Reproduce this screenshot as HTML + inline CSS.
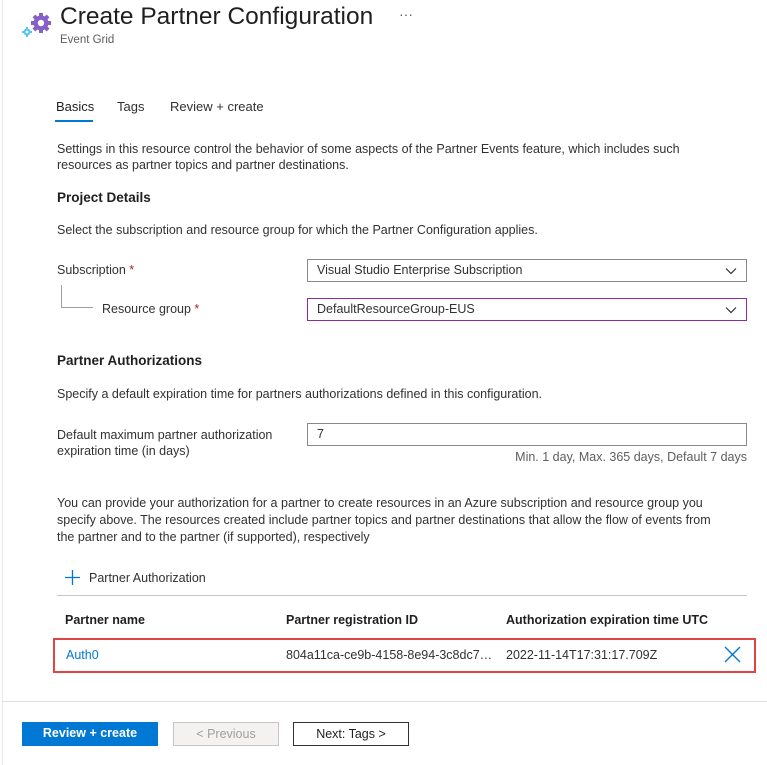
<!DOCTYPE html>
<html><head><meta charset="utf-8"><style>
*{box-sizing:border-box;margin:0;padding:0}
body{width:767px;height:765px;background:#fff;font-family:"Liberation Sans",sans-serif;font-size:12.5px;color:#323130;position:relative;overflow:hidden}
.a{position:absolute;white-space:nowrap}
.dd{position:absolute;border:1px solid #8a8886;height:23px;padding-left:9px;line-height:21px;font-size:12.5px}
.chev{position:absolute;right:9px;top:5px}
.req{color:#a4262c}
.btn{position:absolute;height:24px;line-height:23px;text-align:center;font-size:12.5px}
.h{font-size:13.5px;font-weight:600;color:#201f1e}
</style></head><body>
<div class="a" style="left:2px;top:0;width:1px;height:765px;background:#e8e8e8"></div>
<svg class="a" style="left:21px;top:11px" width="32" height="28" viewBox="0 0 32 28">
<g fill="#8661c5"><circle cx="20" cy="12" r="7.5"/>
<rect x="18" y="2" width="4" height="20"/><rect x="10" y="10" width="20" height="4"/>
<rect x="18" y="2" width="4" height="20" transform="rotate(45 20 12)"/><rect x="18" y="2" width="4" height="20" transform="rotate(-45 20 12)"/></g>
<circle cx="20" cy="12" r="3.2" fill="#fff"/>
<g fill="#50c7f0"><circle cx="6" cy="21" r="3.5"/><rect x="5" y="16" width="2" height="10"/><rect x="1" y="20" width="10" height="2"/></g>
<circle cx="6" cy="21" r="1.4" fill="#fff"/>
</svg>
<div class="a" style="left:60px;top:3px;font-size:24.5px;color:#201f1e">Create Partner Configuration</div>
<div class="a" style="left:399px;top:6px;font-size:14px;color:#605e5c">···</div>
<div class="a" style="left:60px;top:34px;font-size:11.5px;color:#605e5c">Event Grid</div>

<div class="a" style="left:56px;top:99px;font-size:13px;color:#201f1e">Basics</div>
<div class="a" style="left:55px;top:120px;width:38px;height:2px;background:#0078d4"></div>
<div class="a" style="left:117px;top:99px;font-size:13px">Tags</div>
<div class="a" style="left:170px;top:99px;font-size:13px">Review + create</div>

<div class="a" style="left:57px;top:141px;line-height:16px;white-space:normal;width:650px">Settings in this resource control the behavior of some aspects of the Partner Events feature, which includes such resources as partner topics and partner destinations.</div>
<div class="a h" style="left:57px;top:190px">Project Details</div>
<div class="a" style="left:57px;top:223px">Select the subscription and resource group for which the Partner Configuration applies.</div>

<div class="a" style="left:57px;top:263px">Subscription <span class="req">*</span></div>
<div class="a" style="left:61px;top:285px;width:1px;height:23px;background:#a19f9d"></div>
<div class="a" style="left:61px;top:307px;width:32px;height:1px;background:#a19f9d"></div>
<div class="a" style="left:102px;top:302px">Resource group <span class="req">*</span></div>
<div class="dd" style="left:307px;top:259px;width:440px">Visual Studio Enterprise Subscription<svg class="chev" width="12" height="12"><path d="M1 3.5l5 5 5-5" fill="none" stroke="#323130" stroke-width="1.2"/></svg></div>
<div class="dd" style="left:307px;top:298px;width:440px;border-color:#8a2da5">DefaultResourceGroup-EUS<svg class="chev" width="12" height="12"><path d="M1 3.5l5 5 5-5" fill="none" stroke="#323130" stroke-width="1.2"/></svg></div>

<div class="a h" style="left:57px;top:353px">Partner Authorizations</div>
<div class="a" style="left:57px;top:387px">Specify a default expiration time for partners authorizations defined in this configuration.</div>
<div class="a" style="left:57px;top:427px;line-height:16px">Default maximum partner authorization<br>expiration time (in days)</div>
<div class="dd" style="left:307px;top:423px;width:440px">7</div>
<div class="a" style="right:20px;top:450px;color:#605e5c">Min. 1 day, Max. 365 days, Default 7 days</div>

<div class="a" style="left:57px;top:495px;line-height:17px;white-space:normal;width:672px">You can provide your authorization for a partner to create resources in an Azure subscription and resource group you specify above. The resources created include partner topics and partner destinations that allow the flow of events from the partner and to the partner (if supported), respectively</div>

<svg class="a" style="left:65px;top:570px" width="15" height="15"><path d="M7.5 0v15M0 7.5h15" stroke="#0078d4" stroke-width="1.3"/></svg>
<div class="a" style="left:89px;top:571px">Partner Authorization</div>
<div class="a" style="left:57px;top:595px;width:690px;height:1px;background:#c8c6c4"></div>
<div class="a" style="left:65px;top:613px;font-weight:600;color:#201f1e">Partner name</div>
<div class="a" style="left:286px;top:613px;font-weight:600;color:#201f1e">Partner registration ID</div>
<div class="a" style="left:506px;top:613px;font-weight:600;color:#201f1e">Authorization expiration time UTC</div>
<div class="a" style="left:53px;top:638px;width:703px;height:35px;border:2px solid #e04545"></div>
<div class="a" style="left:66px;top:648px;color:#0078d4">Auth0</div>
<div class="a" style="left:286px;top:648px">804a11ca-ce9b-4158-8e94-3c8dc7…</div>
<div class="a" style="left:506px;top:648px">2022-11-14T17:31:17.709Z</div>
<svg class="a" style="left:724px;top:646px" width="17" height="17"><path d="M1 1l15 15M16 1L1 16" stroke="#0078d4" stroke-width="1.4"/></svg>

<div class="a" style="left:2px;top:701px;width:765px;height:1px;background:#e1dfdd"></div>
<div class="btn" style="left:22px;top:722px;width:136px;background:#0078d4;color:#fff;font-weight:600">Review + create</div>
<div class="btn" style="left:173px;top:722px;width:106px;background:#f3f2f1;border:1px solid #c8c6c4;color:#a19f9d">&lt; Previous</div>
<div class="btn" style="left:293px;top:722px;width:116px;border:1px solid #323130;color:#201f1e">Next: Tags &gt;</div>
</body></html>
